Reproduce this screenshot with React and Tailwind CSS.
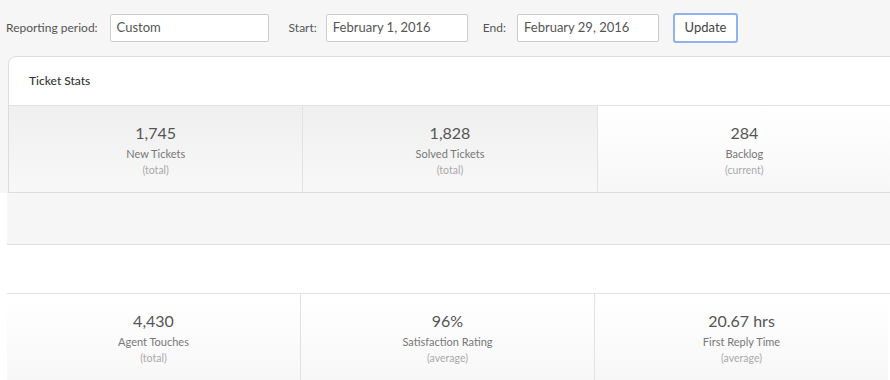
import React from "react";

const rowOne = [
  { value: "1,745", label: "New Tickets", note: "(total)", shaded: true },
  { value: "1,828", label: "Solved Tickets", note: "(total)", shaded: true },
  { value: "284", label: "Backlog", note: "(current)", shaded: false },
];

const rowTwo = [
  { value: "4,430", label: "Agent Touches", note: "(total)" },
  { value: "96%", label: "Satisfaction Rating", note: "(average)" },
  { value: "20.67 hrs", label: "First Reply Time", note: "(average)" },
];

const Stat = ({ value, label, note, shaded, last }) => (
  <div
    className={`flex flex-1 flex-col items-center pt-[17px] ${
      last ? "" : "border-r border-[#e2e2e2]"
    } ${
      shaded
        ? "bg-gradient-to-b from-[#efefef] to-[#f8f8f8]"
        : "bg-gradient-to-b from-[#ffffff] to-[#f7f7f7]"
    }`}
  >
    <div className="text-[16px] leading-[20px] text-[#555]">{value}</div>
    <div className="mt-[4px] text-[11px] leading-[14px] text-[#777]">{label}</div>
    <div className="mt-[2px] text-[10.5px] leading-[14px] text-[#aaa]">{note}</div>
  </div>
);

const Field = ({ label, value, width, labelClass }) => (
  <div className="flex items-center">
    <span className={`text-[12px] text-[#555] ${labelClass}`}>{label}</span>
    <div
      className={`flex h-[28px] items-center rounded-[2px] border border-[#ccc] bg-white px-[6px] text-[13px] text-[#555] ${width}`}
    >
      {value}
    </div>
  </div>
);

export default function App() {
  return (
    <div
      className="h-[380px] w-[890px] overflow-hidden bg-white"
      style={{ fontFamily: "Lato, 'Open Sans', sans-serif" }}
    >
      <div className="bg-[#f6f6f6]">
        <div className="flex h-[56px] items-center pl-[6px]">
          <Field label="Reporting period:" value="Custom" width="w-[159px]" labelClass="mr-[12px]" />
          <Field label="Start:" value="February 1, 2016" width="w-[142px] ml-[9px]" labelClass="ml-[20px]" />
          <Field label="End:" value="February 29, 2016" width="w-[142px] ml-[11px]" labelClass="ml-[15px]" />
          <button
            type="button"
            className="ml-[14px] h-[30px] w-[65px] rounded-[3px] border-2 border-[#8fb3ee] bg-white text-[13px] text-[#444]"
          >
            Update
          </button>
        </div>
        <div className="ml-[8px] w-[900px] rounded-tl-[8px] border border-[#dcdcdc] bg-white">
          <div className="flex h-[49px] items-center border-b border-[#e2e2e2] pl-[20px] text-[12px] font-medium text-[#333]">
            Ticket Stats
          </div>
          <div className="flex h-[86px] w-[882px]">
            {rowOne.map((s, i) => (
              <Stat key={s.label} {...s} last={i === rowOne.length - 1} />
            ))}
          </div>
        </div>
      </div>
      <div className="ml-[7px]">
        <div className="h-[52px] border-b border-[#dedede] bg-[#f6f6f6]" />
        <div className="h-[49px] border-b border-[#e2e2e2] bg-white" />
        <div className="flex h-[87px] w-[881px]">
          {rowTwo.map((s, i) => (
            <Stat key={s.label} {...s} last={i === rowTwo.length - 1} />
          ))}
        </div>
      </div>
    </div>
  );
}
